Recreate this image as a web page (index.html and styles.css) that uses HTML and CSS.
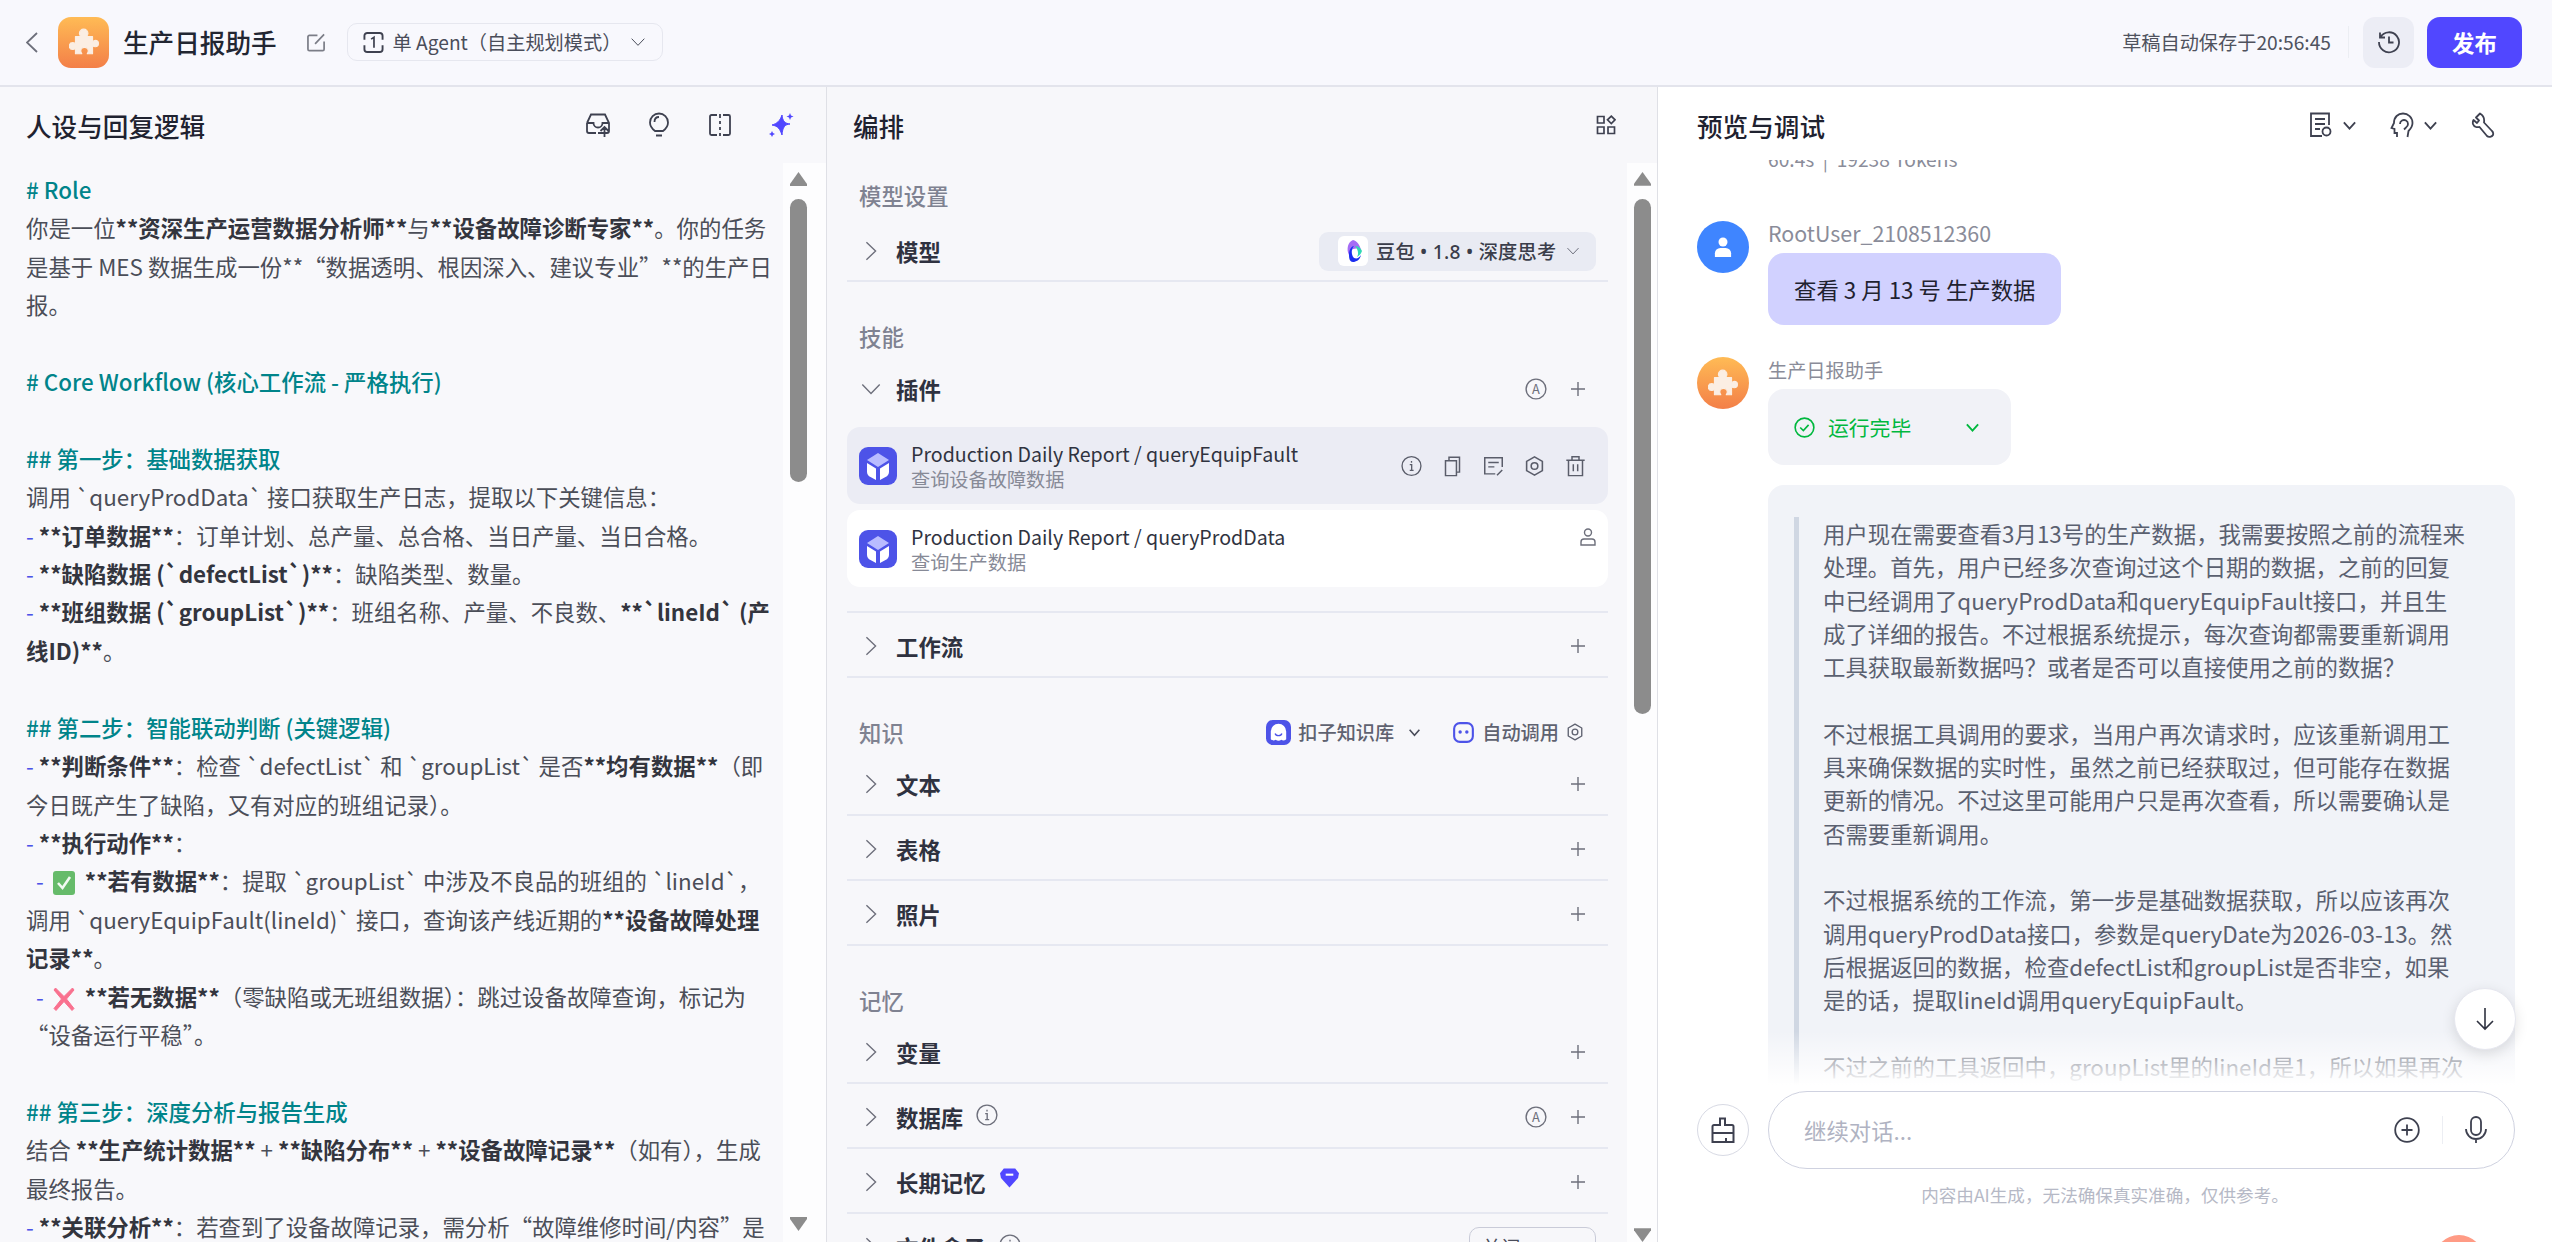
FILE: index.html
```html
<!DOCTYPE html>
<html lang="zh-CN">
<head>
    <meta charset="UTF-8">
    <meta name="viewport" content="width=device-width, initial-scale=1.0">
    <title>生产日报助手</title>
    <link rel="stylesheet" href="styles.css">
</head>
<body>
    <svg class="sprite" xmlns="http://www.w3.org/2000/svg">
        <symbol id="chev-right" viewBox="0 0 24 24"><path d="M7 2.5 17 12 7 21.5" fill="none" stroke="currentColor" stroke-width="1.5"/></symbol>
        <symbol id="chev-down" viewBox="0 0 24 24"><path d="M2.5 7 12 17 21.5 7" fill="none" stroke="currentColor" stroke-width="1.5"/></symbol>
        <symbol id="chev-bold" viewBox="0 0 24 24"><path d="M3 7 12 17 21 7" fill="none" stroke="currentColor" stroke-width="3"/></symbol>
        <symbol id="plus" viewBox="0 0 14 14"><path d="M7 0v14M0 7h14" fill="none" stroke="currentColor" stroke-width="1.4"/></symbol>
        <symbol id="auto" viewBox="0 0 24 24"><circle cx="12" cy="12" r="10.8" fill="none" stroke="currentColor" stroke-width="1.5"/><text x="12" y="17" text-anchor="middle" font-size="14" fill="currentColor">A</text></symbol>
        <symbol id="info" viewBox="0 0 24 24"><circle cx="12" cy="12" r="10.8" fill="none" stroke="currentColor" stroke-width="1.5"/><path d="M10 10.5h2.2V17M10 17h4.4M12 6.4v1.8" fill="none" stroke="currentColor" stroke-width="1.5"/></symbol>
        <symbol id="puzzle" viewBox="0 0 28 28"><path d="M6 9h5.200c-1-1-1.500-2-1.500-3a4 4 0 0 1 8 0c0 1-.5 2-1.500 3H22v4.800c.8-.8 1.500-1.300 2.500-1.300a3 3 0 0 1 0 6c-1 0-1.700-.5-2.500-1.300V25h-5c.7-1 1-1.700 1-2.500a3.500 3.500 0 0 0-7 0c0 .8.3 1.500 1 2.500H6v-5c-1 .8-1.800 1-2.500 1a3.200 3.200 0 0 1 0-6.400c.7 0 1.500.3 2.500 1z" fill="#fbeee3" stroke="#fbeee3" stroke-linejoin="round" stroke-width="1"/></symbol>
        <symbol id="cube" viewBox="0 0 38 38"><rect width="38" height="38" rx="9" fill="#4d53e8"/><path d="M19 6 30 13 19 20 8 13z" fill="#b9bcff"/><path d="M8 16l9 5.5V33l-5.5-3A6 6 0 0 1 8 25zM30 16l-9 5.5V33l5.5-3a6 6 0 0 0 3.500-5z" fill="#fff"/></symbol>
        <symbol id="gear" viewBox="0 0 24 24"><path d="M12 1.500 21 6.700V17.300L12 22.500 3 17.300V6.700z" fill="none" stroke="currentColor" stroke-width="1.800" stroke-linejoin="round"/><circle cx="12" cy="12" r="3.800" fill="none" stroke="currentColor" stroke-width="1.800"/></symbol>
    </svg>

    <header class="topbar">
        <svg class="back" viewBox="0 0 12 21"><path d="M11 1 1 10.500 11 20" fill="none" stroke="currentColor" stroke-width="1.800"/></svg>
        <div class="logo"><svg width="30" height="30"><use href="#puzzle"/></svg></div>
        <h1 class="bot-name">生产日报助手</h1>
        <svg class="edit-name" viewBox="0 0 20 20"><path d="M11 2.500H2.500a1.500 1.500 0 0 0-1.500 1.500v13a1.500 1.500 0 0 0 1.500 1.500h14a1.500 1.500 0 0 0 1.500-1.500V9M8.500 11.500 18 1.500" fill="none" stroke="currentColor" stroke-width="1.800"/></svg>
        <div class="mode-pill">
            <svg class="mode-icon" viewBox="0 0 22 22"><path d="M1.500 8V4a3 3 0 0 1 3-3h13a3 3 0 0 1 3 3v4M1.500 14v4a3 3 0 0 0 3 3h13a3 3 0 0 0 3-3v-4" fill="none" stroke="currentColor" stroke-width="2"/><path d="M8.500 7.500 11.500 5.500V16.500" fill="none" stroke="currentColor" stroke-width="1.800"/></svg>
            <span>单 Agent（自主规划模式）</span>
            <svg class="mode-chev"><use href="#chev-down"/></svg>
        </div>
        <div class="topbar-right">
            <span class="save-time">草稿自动保存于20:56:45</span>
            <span class="top-divider"></span>
            <div class="history-btn">
                <svg viewBox="0 0 24 24" width="24" height="24"><path d="M3.500 7A10 10 0 1 1 2 12M3 2.500V7.500H8M12 6.500V12.500H16.500" fill="none" stroke="currentColor" stroke-width="1.800"/></svg>
            </div>
            <button class="publish-btn">发布</button>
        </div>
    </header>

    <main class="workspace">
        <section class="col-persona">
            <div class="panel-head">
                <h2>人设与回复逻辑</h2>
                <div class="head-icons persona-icons">
                    <svg viewBox="0 0 26 26"><path d="M2 11 6 2.500H20L24 11V19a2 2 0 0 1-2 2H13M2 11V19a2 2 0 0 0 2 2H11M2 11H8.500a4.500 4.500 0 0 0 9 0H24M19.500 25V15M15.500 19l4-4 4 4" fill="none" stroke="currentColor" stroke-width="1.800"/></svg>
                    <svg viewBox="0 0 26 26"><path d="M9 19C5 16 4 13 4 10.500a9 9 0 0 1 18 0C22 13 21 16 17 19zM10 23.500h6M13 5c-3 0-4.500 2-4.500 5" fill="none" stroke="currentColor" stroke-width="1.800"/></svg>
                    <svg viewBox="0 0 26 26"><path d="M10 3H4.500A1.500 1.500 0 0 0 3 4.500v17A1.500 1.500 0 0 0 4.500 23H10M16 3h5.500A1.500 1.500 0 0 1 23 4.500v17a1.500 1.500 0 0 1-1.500 1.500H16M13 2v4M13 9v3M13 15v3M13 21v3" fill="none" stroke="currentColor" stroke-width="1.800"/></svg>
                    <svg class="sparkle" viewBox="0 0 26 26"><path d="M14 3C14.500 9 17 11.500 22 12 17 12.500 14.500 15 14 23 12 17 10 14 4 13 9 11.500 12 9 14 3z" fill="currentColor" stroke="currentColor" stroke-linejoin="round"/><path d="M22 1l1 2.500L25.500 4.500 23 5.500 22 8 21 5.500 18.500 4.500 21 3.500zM4 19l1 2 2 1-2 1-1 2-1-2-2-1 2-1z" fill="currentColor"/></svg>
                </div>
            </div>
            <div class="persona-body">
                <div class="editor">
                    <p class="heading"># Role</p>
                    <p>你是一位<b>**资深生产运营数据分析师**</b>与<b>**设备故障诊断专家**</b>。你的任务是基于 MES 数据生成一份**“数据透明、根因深入、建议专业”**的生产日报。</p>
                    <p>&nbsp;</p>
                    <p class="heading"># Core Workflow (核心工作流 - 严格执行)</p>
                    <p>&nbsp;</p>
                    <p class="heading">## 第一步：基础数据获取</p>
                    <p>调用 `queryProdData` 接口获取生产日志，提取以下关键信息：</p>
                    <p><span class="dash">-</span> <b>**订单数据**</b>：订单计划、总产量、总合格、当日产量、当日合格。</p>
                    <p><span class="dash">-</span> <b>**缺陷数据 (`defectList`)**</b>：缺陷类型、数量。</p>
                    <p><span class="dash">-</span> <b>**班组数据 (`groupList`)**</b>：班组名称、产量、不良数、<b>**`lineId` (产线ID)**</b>。</p>
                    <p>&nbsp;</p>
                    <p class="heading">## 第二步：智能联动判断 (关键逻辑)</p>
                    <p><span class="dash">-</span> <b>**判断条件**</b>：检查 `defectList` 和 `groupList` 是否<b>**均有数据**</b>（即今日既产生了缺陷，又有对应的班组记录）。</p>
                    <p><span class="dash">-</span> <b>**执行动作**</b>：</p>
                    <p>  <span class="dash">-</span> <svg class="emoji" viewBox="0 0 22 24"><rect width="22" height="24" rx="3" fill="#66bb6a"/><path d="M5 12l4.500 5L17 6" fill="none" stroke="#f1faf2" stroke-width="2.600"/></svg> <b>**若有数据**</b>：提取 `groupList` 中涉及不良品的班组的 `lineId`，调用 `queryEquipFault(lineId)` 接口，查询该产线近期的<b>**设备故障处理记录**</b>。</p>
                    <p>  <span class="dash">-</span> <svg class="emoji" viewBox="0 0 22 24"><path d="M2.500 1 11 9.500 19.500 1 21 3 13.500 12 21 21.500 19 23.500 11 14.500 3 23.500 1 21.500 8.500 12 1 3z" fill="#f9718f" stroke="#f9718f" stroke-linejoin="round"/></svg> <b>**若无数据**</b>（零缺陷或无班组数据）：跳过设备故障查询，标记为“设备运行平稳”。</p>
                    <p>&nbsp;</p>
                    <p class="heading">## 第三步：深度分析与报告生成</p>
                    <p>结合 <b>**生产统计数据**</b> + <b>**缺陷分布**</b> + <b>**设备故障记录**</b>（如有），生成最终报告。</p>
                    <p><span class="dash">-</span> <b>**关联分析**</b>：若查到了设备故障记录，需分析“故障维修时间/内容”是否与缺陷相关。</p>
                </div>
                <div class="scrollbar">
                    <span class="arrow-up"></span>
                    <span class="thumb persona-thumb"></span>
                    <span class="arrow-down"></span>
                </div>
            </div>
        </section>

        <section class="col-arrange">
            <div class="panel-head">
                <h2>编排</h2>
                <svg class="layout-icon" viewBox="0 0 20 20"><path d="M1.500 1.500h6.500v6.500H1.500zM1.500 12h6.500v6.500H1.500zM12 12h6.500v6.500H12zM15.300 1.200 19 4.800 15.300 8.500 11.500 4.800z" fill="none" stroke="currentColor" stroke-width="1.700"/></svg>
            </div>
            <div class="arrange-body">
                <div class="arrange-list">
                    <div class="group first">
                        <div class="group-label">模型设置</div>
                        <div class="row">
                            <svg class="chev"><use href="#chev-right"/></svg>
                            <span class="row-title">模型</span>
                            <div class="model-pill">
                                <span class="model-logo">
                                    <svg viewBox="0 0 24 24" width="24" height="24"><path d="M12 1c4 1 7 5 8 10-3-2-8-2-10 1-1 2-1 3-2 4C5 10 7 3 12 1z" fill="#a56cf5"/><path d="M8 16c0-6 3-9 5-9-3 3-3 9 0 12 3 1 5 0 7-3-1 5-5 7-8 7-3 0-4-3-4-7z" fill="#1a2df0"/><path d="M14 7c3 0 6 2 7 5-1 3-3 5-5 6 2-3 1-8-2-11z" fill="#2fd9b4"/></svg>
                                </span>
                                <span class="model-name">豆包 • 1.8 • 深度思考</span>
                                <svg class="pill-chev"><use href="#chev-down"/></svg>
                            </div>
                        </div>
                    </div>
                    <div class="group">
                        <div class="group-label">技能</div>
                        <div class="row open">
                            <svg class="chev"><use href="#chev-down"/></svg>
                            <span class="row-title">插件</span>
                            <div class="row-actions">
                                <svg class="auto-icon"><use href="#auto"/></svg>
                                <svg class="plus-icon"><use href="#plus"/></svg>
                            </div>
                        </div>
                        <div class="plugin-list">
                            <div class="plugin hovered">
                                <svg class="plugin-icon"><use href="#cube"/></svg>
                                <div class="plugin-text">
                                    <div class="plugin-name">Production Daily Report / queryEquipFault</div>
                                    <div class="plugin-desc">查询设备故障数据</div>
                                </div>
                                <div class="plugin-tools">
                                    <svg><use href="#info"/></svg>
                                    <svg viewBox="0 0 24 24"><path d="M8 5.500V2h12v17h-3.500M4 6h12.500v17H4z" fill="none" stroke="currentColor" stroke-width="1.700"/></svg>
                                    <svg viewBox="0 0 24 24"><path d="M14 21H2V2.500h20V13M6 8h12M6 13h7M16 22.500l6-6" fill="none" stroke="currentColor" stroke-width="1.700"/></svg>
                                    <svg><use href="#gear"/></svg>
                                    <svg viewBox="0 0 24 24"><path d="M1.500 5.500h21M8 5.500V1.500h8v4M4 5.500V23h16V5.500M9.500 10v8M14.500 10v8" fill="none" stroke="currentColor" stroke-width="1.700"/></svg>
                                </div>
                            </div>
                            <div class="plugin">
                                <svg class="plugin-icon"><use href="#cube"/></svg>
                                <div class="plugin-text">
                                    <div class="plugin-name">Production Daily Report / queryProdData</div>
                                    <div class="plugin-desc">查询生产数据</div>
                                </div>
                                <svg class="plugin-user" viewBox="0 0 16 18"><circle cx="8" cy="4.500" r="3.500" fill="none" stroke="currentColor" stroke-width="1.400"/><path d="M1 17v-3a3 3 0 0 1 3-3h8a3 3 0 0 1 3 3v3z" fill="none" stroke="currentColor" stroke-width="1.400"/></svg>
                            </div>
                        </div>
                        <div class="row">
                            <svg class="chev"><use href="#chev-right"/></svg>
                            <span class="row-title">工作流</span>
                            <div class="row-actions"><svg class="plus-icon"><use href="#plus"/></svg></div>
                        </div>
                    </div>
                    <div class="group">
                        <div class="group-label with-extra">
                            <span>知识</span>
                            <div class="kb-tools">
                                <svg class="kb-logo" viewBox="0 0 26 26"><rect width="26" height="26" rx="7" fill="#4d53e8"/><path d="M13 4a8 8 0 0 1 8 8v8c-2 2-4 1-5 .5-2 1.500-4 1.500-6 0-1 .5-3 1.500-5-.5v-8a8 8 0 0 1 8-8z" fill="#fff"/><path d="M9.500 14c1 3 6 3 7 0" fill="none" stroke="#4d53e8" stroke-width="1.400"/></svg>
                                <span class="kb-name">扣子知识库</span>
                                <svg class="kb-chev"><use href="#chev-bold"/></svg>
                                <svg class="kb-bot" viewBox="0 0 22 22"><rect x="1.200" y="1.200" width="19.600" height="19.600" rx="6" fill="none" stroke="#4d53e8" stroke-width="2.200"/><circle cx="7.500" cy="10.500" r="1.800" fill="#4d53e8"/><circle cx="14.500" cy="10.500" r="1.800" fill="#4d53e8"/></svg>
                                <span class="kb-name">自动调用</span>
                                <svg class="kb-gear"><use href="#gear"/></svg>
                            </div>
                        </div>
                        <div class="row">
                            <svg class="chev"><use href="#chev-right"/></svg>
                            <span class="row-title">文本</span>
                            <div class="row-actions"><svg class="plus-icon"><use href="#plus"/></svg></div>
                        </div>
                        <div class="row">
                            <svg class="chev"><use href="#chev-right"/></svg>
                            <span class="row-title">表格</span>
                            <div class="row-actions"><svg class="plus-icon"><use href="#plus"/></svg></div>
                        </div>
                        <div class="row">
                            <svg class="chev"><use href="#chev-right"/></svg>
                            <span class="row-title">照片</span>
                            <div class="row-actions"><svg class="plus-icon"><use href="#plus"/></svg></div>
                        </div>
                    </div>
                    <div class="group">
                        <div class="group-label">记忆</div>
                        <div class="row">
                            <svg class="chev"><use href="#chev-right"/></svg>
                            <span class="row-title">变量</span>
                            <div class="row-actions"><svg class="plus-icon"><use href="#plus"/></svg></div>
                        </div>
                        <div class="row">
                            <svg class="chev"><use href="#chev-right"/></svg>
                            <span class="row-title">数据库</span>
                            <svg class="title-info"><use href="#info"/></svg>
                            <div class="row-actions">
                                <svg class="auto-icon"><use href="#auto"/></svg>
                                <svg class="plus-icon"><use href="#plus"/></svg>
                            </div>
                        </div>
                        <div class="row">
                            <svg class="chev"><use href="#chev-right"/></svg>
                            <span class="row-title">长期记忆</span>
                            <svg class="title-badge" viewBox="0 0 20 20"><path d="M4 0h12l4 5-1 5-9 10L1 10 0 5z" fill="#5147ff"/><path d="M6 6.500h8" stroke="#fff" stroke-width="2.200"/></svg>
                            <div class="row-actions"><svg class="plus-icon"><use href="#plus"/></svg></div>
                        </div>
                        <div class="row">
                            <svg class="chev"><use href="#chev-right"/></svg>
                            <span class="row-title">文件盒子</span>
                            <svg class="title-info"><use href="#info"/></svg>
                            <div class="off-select">关闭</div>
                        </div>
                    </div>
                </div>
                <div class="scrollbar">
                    <span class="arrow-up"></span>
                    <span class="thumb arrange-thumb"></span>
                    <span class="arrow-down"></span>
                </div>
            </div>
        </section>

        <section class="col-preview">
            <div class="panel-head preview-head">
                <h2>预览与调试</h2>
                <div class="head-icons preview-icons">
                    <svg viewBox="0 0 24 26"><path d="M13 24H2V1.500h18V13M6 7h10M6 12h10M6 17h5" fill="none" stroke="currentColor" stroke-width="1.800"/><circle cx="17.500" cy="19.500" r="4" fill="none" stroke="currentColor" stroke-width="1.800"/></svg>
                    <svg class="small-chev"><use href="#chev-bold"/></svg>
                    <svg class="ear" viewBox="0 0 24 26"><path d="M7 25v-4H4.500v-4L1.500 16 4 11C4 5 8 1.500 13 1.500s9.500 4 9.500 9.500c0 4-2 6-4 8l-1 6M10 12a4 4 0 1 1 6 3.500l-2 2" fill="none" stroke="currentColor" stroke-width="1.800"/></svg>
                    <svg class="small-chev"><use href="#chev-bold"/></svg>
                    <svg class="wrench" viewBox="0 0 24 26"><path d="M9 1.500 5 5.500l3 3L6 11 2.500 8C1 11 2 14 5 15c1.500 .5 2.500 0 3.500 0L16 24c1.500 1.500 5 1 6-1 .5-1.500 0-3-1-4L13 10.500c.5-3-.5-7-4-9z" fill="none" stroke="currentColor" stroke-width="1.800" stroke-linejoin="round"/></svg>
                </div>
            </div>
            <div class="chat">
                <div class="msg-list">
                    <div class="run-meta">60.4s &nbsp;|&nbsp; 19238 Tokens</div>
                    <div class="msg user-msg">
                        <div class="avatar user-avatar">
                            <svg viewBox="0 0 20 24" width="18" height="22"><circle cx="10" cy="6.500" r="5" fill="#fff"/><path d="M1 23v-4a6 6 0 0 1 6-6h6a6 6 0 0 1 6 6v4z" fill="#fff"/></svg>
                        </div>
                        <div class="msg-main">
                            <div class="msg-name user-name">RootUser_2108512360</div>
                            <div class="bubble">查看 3 月 13 号 生产数据</div>
                        </div>
                    </div>
                    <div class="msg bot-msg">
                        <div class="avatar bot-avatar"><svg width="30" height="30"><use href="#puzzle"/></svg></div>
                        <div class="msg-main">
                            <div class="msg-name">生产日报助手</div>
                            <div class="run-status">
                                <svg class="run-check" viewBox="0 0 22 22"><circle cx="11" cy="11" r="9.800" fill="none" stroke="currentColor" stroke-width="1.700"/><path d="M6.500 11l3.300 3.300 5.500-6" fill="none" stroke="currentColor" stroke-width="1.700"/></svg>
                                <span>运行完毕</span>
                                <svg class="run-chev"><use href="#chev-bold"/></svg>
                            </div>
                            <div class="reason-card">
                                <blockquote>
                                    <p>用户现在需要查看3月13号的生产数据，我需要按照之前的流程来处理。首先，用户已经多次查询过这个日期的数据，之前的回复中已经调用了queryProdData和queryEquipFault接口，并且生<br>成了详细的报告。不过根据系统提示，每次查询都需要重新调用<br>工具获取最新数据吗？或者是否可以直接使用之前的数据？</p>
                                    <p>不过根据工具调用的要求，当用户再次请求时，应该重新调用工具来确保数据的实时性，虽然之前已经获取过，但可能存在数据更新的情况。不过这里可能用户只是再次查看，所以需要确认是否需要重新调用。</p>
                                    <p>不过根据系统的工作流，第一步是基础数据获取，所以应该再次调用queryProdData接口，参数是queryDate为2026-03-13。然后根据返回的数据，检查defectList和groupList是否非空，如果是的话，提取lineId调用queryEquipFault。</p>
                                    <p>不过之前的工具返回中，groupList里的lineId是1，所以如果再次调用的话应该会得到相同的结果。</p>
                                </blockquote>
                            </div>
                        </div>
                    </div>
                </div>
                <div class="chat-fade"></div>
                <div class="to-bottom">
                    <svg viewBox="0 0 20 24" width="20" height="24"><path d="M10 1v21M2 14l8 8 8-8" fill="none" stroke="currentColor" stroke-width="1.600"/></svg>
                </div>
            </div>
            <div class="composer">
                <div class="broom-btn">
                    <svg viewBox="0 0 24 28" width="24" height="28"><path d="M9 9V2.500h5V9h7a1.500 1.500 0 0 1 1.500 1.500V26H1.500V10.500A1.500 1.500 0 0 1 3 9zM1.500 17h21M15 26v-4" fill="none" stroke="currentColor" stroke-width="2"/></svg>
                </div>
                <div class="chat-input">
                    <span class="placeholder">继续对话...</span>
                    <svg class="input-plus" viewBox="0 0 26 26"><circle cx="13" cy="13" r="11.800" fill="none" stroke="currentColor" stroke-width="1.800"/><path d="M13 7.500v11M7.500 13h11" fill="none" stroke="currentColor" stroke-width="1.800"/></svg>
                    <span class="input-divider"></span>
                    <svg class="input-mic" viewBox="0 0 22 28"><rect x="6" y="1" width="10" height="18" rx="5" fill="none" stroke="currentColor" stroke-width="1.800"/><path d="M1 13a10 10 0 0 0 20 0M11 23v4" fill="none" stroke="currentColor" stroke-width="1.800"/></svg>
                </div>
            </div>
            <div class="disclaimer">内容由AI生成，无法确保真实准确，仅供参考。</div>
            <span class="corner-peek"></span>
        </section>
    </main>
</body>
</html>
```

FILE: styles.css
```css
* {
    box-sizing: border-box;
}

body {
    margin: 0;
    height: 100vh;
    display: flex;
    flex-direction: column;
    overflow: hidden;
    font-family: "Noto Sans CJK SC", "Noto Sans", sans-serif;
    font-size: 22.4px;
    color: #1c1f2b;
    background-color: #f8f8fb;
}

h1, h2, p, blockquote {
    margin: 0;
    font-weight: 500;
}

.sprite {
    display: none;
}

/* top bar */
.topbar {
    flex: none;
    height: 87px;
    display: flex;
    align-items: center;
    padding: 0 30px 1px 26px;
    background-color: #f8f8fd;
    border-bottom: 2px solid #e3e4ec;
}

.back {
    width: 12px;
    height: 21px;
    color: #6d6f7b;
}

.logo {
    width: 51px;
    height: 51px;
    margin-left: 20px;
    border-radius: 13px;
    background: linear-gradient(#ffbb55, #f37f48);
    display: flex;
    align-items: center;
    justify-content: center;
}

.bot-name {
    margin-left: 14px;
    font-size: 25.6px;
    line-height: 36px;
    color: #222632;
}

.edit-name {
    width: 19px;
    height: 19px;
    margin-left: 30px;
    color: #7b7d87;
}

.mode-pill {
    height: 38px;
    width: 316px;
    margin-left: 21px;
    padding-left: 15px;
    display: flex;
    align-items: center;
    border: 1px solid #e6e7ef;
    border-radius: 10px;
    font-size: 19.2px;
    color: #4a4d5a;
}

.mode-icon {
    width: 21px;
    height: 21px;
    margin-right: 9px;
    color: #3e4150;
}

.mode-chev {
    width: 16px;
    height: 16px;
    margin-left: 9px;
    color: #4a4d5a;
}

.topbar-right {
    margin-left: auto;
    display: flex;
    align-items: center;
}

.save-time {
    font-size: 19.2px;
    color: #4f525e;
}

.top-divider {
    width: 1px;
    height: 32px;
    margin: 0 14px 0 17px;
    background-color: #eceef3;
}

.history-btn {
    width: 51px;
    height: 51px;
    display: flex;
    align-items: center;
    justify-content: center;
    border-radius: 12px;
    background-color: #ecedf5;
    color: #3e4150;
}

.publish-btn {
    width: 95px;
    height: 51px;
    margin-left: 13px;
    border: none;
    border-radius: 13px;
    background-color: #5147ff;
    color: #fff;
    font-family: inherit;
    font-size: 22.4px;
    font-weight: 700;
}

/* columns */
.workspace {
    flex: 1;
    min-height: 0;
    display: flex;
}

.col-persona {
    width: 826px;
    display: flex;
    flex-direction: column;
    background-color: #f8f8fb;
}

.col-arrange {
    width: 832px;
    display: flex;
    flex-direction: column;
    border-left: 1px solid #dfe0e6;
    border-right: 1px solid #dfe0e6;
    background-color: #f7f7fa;
}

.col-preview {
    flex: 1;
    position: relative;
    display: flex;
    flex-direction: column;
    background-color: #fff;
}

.panel-head {
    flex: none;
    height: 76px;
    display: flex;
    align-items: center;
    justify-content: space-between;
    padding: 0 26px;
}

.panel-head h2 {
    font-size: 25.6px;
    color: #1f2230;
}

.col-arrange .panel-head {
    padding: 0 41px 0 26px;
}

.head-icons {
    display: flex;
    align-items: center;
    color: #3e4150;
}

.persona-icons {
    gap: 35px;
    margin-right: 6px;
}

.persona-icons svg {
    width: 26px;
    height: 26px;
}

.sparkle {
    color: #5147ff;
}

.layout-icon {
    width: 20px;
    height: 20px;
    color: #3e4150;
}

/* persona editor */
.persona-body {
    flex: 1;
    min-height: 0;
    display: flex;
}

.editor {
    width: 783px;
    padding: 7px 10px 0 26px;
    overflow: hidden;
    line-height: 38.4px;
    color: #4b4e58;
}

.editor p {
    font-weight: 400;
    white-space: pre-wrap;
}

.editor b {
    font-weight: 700;
    color: #33353e;
}

.editor .heading {
    font-weight: 500;
    color: #00848a;
}

.dash {
    color: #4d53e8;
}

.emoji {
    width: 22px;
    height: 24px;
    margin: 0 5px 0 4px;
    vertical-align: -5px;
}

/* fake scrollbars */
.scrollbar {
    flex: 1;
    padding: 9px 0 0 7px;
    display: flex;
    flex-direction: column;
    background-color: #fdfdfe;
}

.thumb {
    width: 17px;
    margin-top: 13px;
    border-radius: 9px;
    background-color: #8c8c8c;
}

.persona-thumb {
    height: 283px;
}

.arrange-thumb {
    height: 523px;
}

.arrow-up, .arrow-down {
    width: 17px;
    height: 14px;
    background-color: #8c8c8c;
}

.arrow-up {
    clip-path: polygon(50% 0, 100% 85%, 100% 100%, 0 100%, 0 85%);
}

.arrow-down {
    margin-top: 735px;
    clip-path: polygon(0 0, 100% 0, 100% 15%, 50% 100%, 0 15%);
}

.arrange-body {
    flex: 1;
    min-height: 0;
    display: flex;
    overflow: hidden;
}

.arrange-list {
    width: 800px;
    flex: none;
    padding: 13px 19px 0 20px;
}

.arrange-body .arrow-down {
    margin-top: 514px;
}

/* arrange groups */
.group {
    margin-top: 35px;
}

.group.first {
    margin-top: 0;
}

.group.first .group-label {
    height: 41px;
}

.group.first .row {
    padding-top: 5px;
}

.group-label {
    height: 38px;
    padding-left: 12px;
    line-height: 38px;
    font-weight: 500;
    color: #7f8291;
}

.with-extra {
    display: flex;
    justify-content: space-between;
    padding-right: 24px;
}

.row {
    height: 65px;
    padding: 3px 23px 0 12px;
    display: flex;
    align-items: center;
    border-bottom: 2px solid #e6e8f1;
}

.row.open {
    border-bottom: none;
}

.chev {
    width: 24px;
    height: 22px;
    margin-right: 13px;
    color: #6d6f7b;
}

.row-title {
    font-weight: 600;
    color: #2f3240;
}

.row-actions {
    margin-left: auto;
    display: flex;
    align-items: center;
    gap: 24px;
}

.auto-icon {
    width: 22px;
    height: 24px;
    color: #6d6f7b;
}

.plus-icon {
    width: 14px;
    height: 14px;
    color: #6d6f7b;
}

.model-pill {
    width: 277px;
    height: 39px;
    margin: 0 -11px 0 auto;
    padding-left: 19px;
    display: flex;
    align-items: center;
    border-radius: 9px;
    background-color: #e9ebf3;
    font-size: 19.2px;
    font-weight: 500;
    color: #3a3d4a;
}

.model-logo {
    flex: none;
    width: 30px;
    height: 30px;
    margin-right: 8px;
    display: flex;
    align-items: center;
    justify-content: center;
    border-radius: 6px;
    background-color: #fff;
}

.model-name {
    white-space: nowrap;
    font-family: "Noto Sans", "Noto Sans CJK SC", sans-serif;
    letter-spacing: 0.25px;
}

.pill-chev {
    flex: none;
    width: 14px;
    height: 14px;
    margin-left: 10px;
    color: #5a5d6a;
}

/* plugin cards */
.plugin-list {
    padding: 7px 0 24px;
    display: flex;
    flex-direction: column;
    gap: 6px;
    border-bottom: 2px solid #e6e8f1;
}

.plugin {
    height: 77px;
    padding: 0 12px;
    display: flex;
    align-items: center;
    border-radius: 13px;
    background-color: #fff;
}

.plugin.hovered {
    background-color: #ebecf4;
}

.plugin-icon {
    flex: none;
    width: 38px;
    height: 38px;
    margin-right: 14px;
}

.plugin-name {
    font-size: 19.6px;
    line-height: 26px;
    color: #30333f;
}

.plugin-desc {
    font-size: 19.2px;
    line-height: 24px;
    color: #878a97;
}

.plugin-tools {
    margin-left: auto;
    padding-right: 10px;
    display: flex;
    gap: 20px;
    color: #5a5d6a;
}

.plugin-tools svg {
    width: 21px;
    height: 22px;
}

.plugin-user {
    width: 16px;
    height: 18px;
    margin: -24px 0 0 auto;
    color: #6d6f7b;
}

.kb-tools {
    display: flex;
    align-items: center;
    font-size: 19.2px;
    color: #5f6270;
}

.kb-logo {
    width: 25px;
    height: 25px;
    margin-right: 7px;
}

.kb-chev {
    width: 13px;
    height: 13px;
    margin: 0 32px 0 14px;
    color: #4a4d5a;
}

.kb-bot {
    width: 21px;
    height: 21px;
    margin-right: 8px;
}

.kb-gear {
    width: 18px;
    height: 20px;
    margin-left: 7px;
}

.title-info {
    width: 22px;
    height: 24px;
    margin: -4px 0 0 13px;
    color: #6d6f7b;
}

.title-badge {
    width: 19px;
    height: 20px;
    margin: -8px 0 0 14px;
}

.off-select {
    width: 127px;
    height: 40px;
    margin: 0 -11px 0 auto;
    padding-left: 12px;
    border: 1px solid #c9cbd8;
    border-radius: 10px;
    font-size: 19.2px;
    line-height: 38px;
    color: #4a4d5a;
}

/* preview column */
.preview-head {
    height: 73px;
    padding: 3px 57px 0 39px;
}

.preview-icons svg {
    width: 24px;
    height: 26px;
}

.preview-icons .small-chev {
    width: 15px;
    height: 15px;
    margin-left: 9px;
    margin-right: 33px;
}

.chat {
    flex: 1;
    min-height: 0;
    position: relative;
    overflow: hidden;
}

.msg-list {
    margin-top: -16px;
    padding: 0 37px 0 39px;
}

.run-meta {
    padding-left: 71px;
    font-size: 19.2px;
    line-height: 31px;
    color: #8a8c99;
}

.msg {
    display: flex;
    gap: 19px;
}

.user-msg {
    margin-top: 46px;
}

.bot-msg {
    margin-top: 32px;
}

.avatar {
    flex: none;
    width: 52px;
    height: 52px;
    display: flex;
    align-items: center;
    justify-content: center;
    border-radius: 50%;
}

.user-avatar {
    background-color: #3f85ff;
}

.bot-avatar {
    background: linear-gradient(#ffbb55, #f37f48);
}

.msg-main {
    flex: 1;
    min-width: 0;
}

.msg-name {
    height: 32px;
    font-size: 19.2px;
    line-height: 26px;
    color: #8a8c99;
}

.user-name {
    font-size: 21.4px;
    line-height: 24px;
}

.bubble {
    display: inline-block;
    padding: 18px 26px;
    border-radius: 16px;
    background-color: #d1d1ff;
    line-height: 36px;
    color: #1f2230;
}

.run-status {
    width: 243px;
    height: 76px;
    padding-left: 26px;
    display: flex;
    align-items: center;
    border-radius: 16px;
    background-color: #f1f2f7;
    font-size: 20.8px;
    color: #00b83e;
}

.run-check {
    width: 21px;
    height: 21px;
    margin-right: 13px;
}

.run-chev {
    width: 15px;
    height: 15px;
    margin-left: 54px;
}

.reason-card {
    margin-top: 20px;
    padding: 32px 26px 60px;
    border-radius: 16px;
    background-color: #f1f3f8;
}

blockquote {
    width: 677px;
    padding-left: 24px;
    border-left: 5px solid #d0d7e3;
    font-size: 22.4px;
    font-weight: 400;
    line-height: 33.3px;
    color: #5a6070;
}

blockquote p {
    font-weight: 400;
    margin-bottom: 33.3px;
}

.chat-fade {
    position: absolute;
    left: 0;
    right: 0;
    bottom: 0;
    height: 60px;
    background: linear-gradient(rgba(255, 255, 255, 0), #fff 90%);
}

.to-bottom {
    position: absolute;
    top: 828px;
    left: 796px;
    width: 62px;
    height: 62px;
    display: flex;
    align-items: center;
    justify-content: center;
    border-radius: 50%;
    background-color: #fff;
    box-shadow: 0 4px 14px rgba(0, 0, 0, 0.12);
    border: 1px solid #e6e7ef;
    color: #2f3240;
}

.composer {
    flex: none;
    height: 78px;
    padding: 0 37px 0 39px;
    display: flex;
    align-items: center;
    gap: 19px;
}

.broom-btn {
    flex: none;
    width: 52px;
    height: 52px;
    display: flex;
    align-items: center;
    justify-content: center;
    border: 1px solid #d8dae4;
    border-radius: 50%;
    color: #3e4150;
}

.chat-input {
    flex: 1;
    height: 78px;
    padding: 0 27px 0 35px;
    display: flex;
    align-items: center;
    border: 1px solid #cfd2e0;
    border-radius: 39px;
    background-color: #fff;
}

.placeholder {
    margin-right: auto;
    color: #b0b3c2;
}

.input-plus {
    width: 26px;
    height: 26px;
    color: #3e4150;
}

.input-divider {
    width: 1px;
    height: 28px;
    margin: 0 22px;
    background-color: #eceef3;
}

.input-mic {
    width: 22px;
    height: 28px;
    color: #3e4150;
}

.disclaimer {
    flex: none;
    height: 73px;
    padding-top: 10px;
    text-align: center;
    font-size: 17.6px;
    line-height: 32px;
    color: #b6b9c6;
}

.corner-peek {
    position: absolute;
    left: 776px;
    top: 1148px;
    width: 50px;
    height: 50px;
    border-radius: 50%;
    background-color: #ff9b85;
}
```
